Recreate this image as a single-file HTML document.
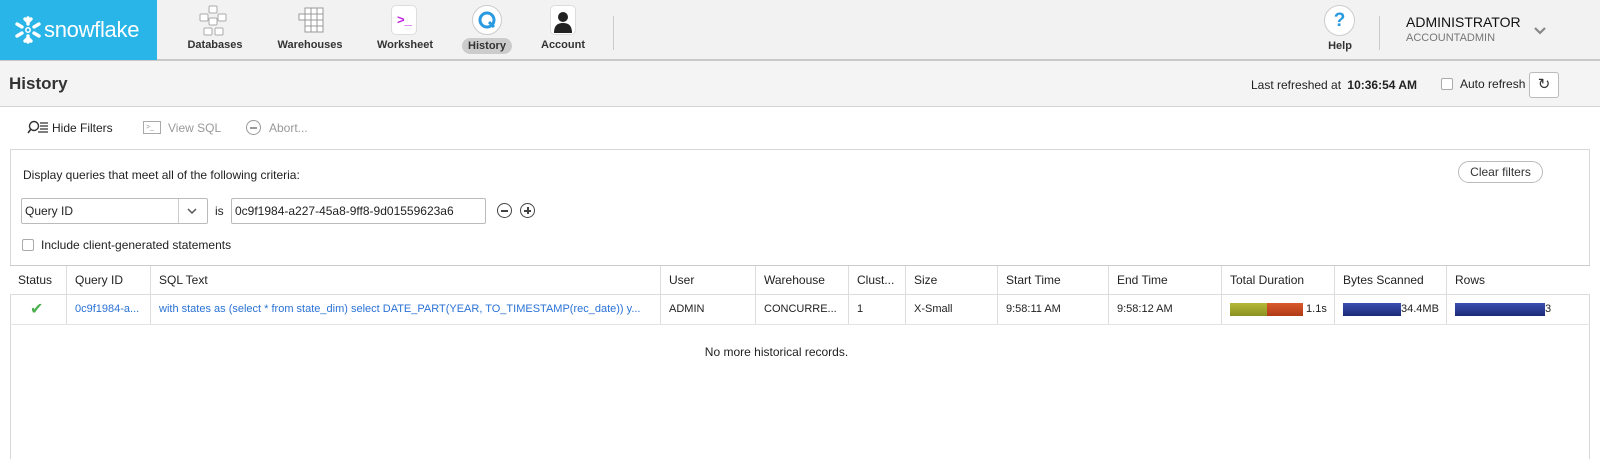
<!DOCTYPE html>
<html><head><meta charset="utf-8"><style>
*{box-sizing:border-box;margin:0;padding:0}
body{width:1600px;height:448px;overflow:hidden;background:#fff;font-family:"Liberation Sans",Arial,sans-serif;font-size:12px;color:#222;position:relative}
.a{position:absolute}
.top{left:0;top:0;width:1600px;height:61px;background:#f2f2f2;border-bottom:2px solid #c8c8c8}
.logo{left:0;top:0;width:157px;height:60px;background:#29b5e8;color:#fff;font-size:22px}
.nav{font-size:11px;font-weight:bold;color:#333;text-align:center}
.ico{width:30px;height:30px;border-radius:5px;background:#fff;border:1px solid #ddd}
.hdr{left:0;top:61px;width:1600px;height:46px;background:#f4f4f4;border-bottom:1px solid #d5d5d5}
.panel{left:10px;top:149px;width:1580px;height:310px;border:1px solid #d8d8d8;border-bottom:none}
.th{top:265px;height:30px;border-top:1px solid #ccc;border-bottom:1px solid #ddd;background:#fff}
.col{position:absolute;top:0;height:100%;border-left:1px solid #ddd;padding-left:8px;line-height:29px;font-size:12px;white-space:nowrap;overflow:hidden}
.blue{color:#2a72d6}
</style></head><body>
<div class="a top"></div>
<div class="a logo">
<svg class="a" style="left:12px;top:15px" width="32" height="30" viewBox="0 0 32 30"><g stroke="#fff" stroke-width="3.4" stroke-linecap="round" fill="none"><path d="M16 3v6M16 21v6M5 9l5 3M22 18l5 3M5 21l5-3M22 12l5-3"/><path d="M13 4l3 3 3-3M13 26l3-3 3 3"/></g><circle cx="16" cy="15" r="2.2" fill="none" stroke="#fff" stroke-width="1.5"/></svg>
<div class="a" style="left:44px;top:17px;letter-spacing:-0.3px">snowflake</div>
</div>
<div class="a" style="left:198px;top:5px"><svg width="32" height="32" viewBox="0 0 32 32" fill="#fff" stroke="#aaa"><rect x="11" y="1" width="8" height="7" rx="1"/><rect x="2" y="9" width="8" height="7" rx="1"/><rect x="20" y="9" width="8" height="7" rx="1"/><rect x="11" y="13" width="8" height="7" rx="1"/><rect x="6" y="23" width="8" height="7" rx="1"/><rect x="17" y="23" width="8" height="7" rx="1"/></svg></div>
<div class="a nav" style="left:180px;top:39px;width:70px">Databases</div>
<div class="a" style="left:297px;top:6px"><svg width="28" height="28" viewBox="0 0 28 28" fill="#fff" stroke="#999"><path d="M8 2h18v24H8zM8 8h18M8 14h18M8 20h18M14 2v24M20 2v24M2 8h6v6H2z"/></svg></div>
<div class="a nav" style="left:270px;top:39px;width:80px">Warehouses</div>
<div class="a ico" style="left:391px;top:5px;width:26px;height:30px"><span class="a" style="left:5px;top:6px;color:#c020e0;font-size:13px;font-weight:bold">&gt;_</span></div>
<div class="a nav" style="left:370px;top:39px;width:70px">Worksheet</div>
<div class="a" style="left:472px;top:5px;width:30px;height:30px;border-radius:50%;background:#fff;border:1px solid #ccc"><svg width="28" height="28" viewBox="0 0 28 28"><circle cx="14" cy="14" r="7" fill="none" stroke="#2a9ae0" stroke-width="3"/><path d="M16 16l5 5" stroke="#2a9ae0" stroke-width="3"/></svg></div>
<div class="a nav" style="left:462px;top:38px;width:50px;height:16px;line-height:16px;border-radius:8px;background:#ccc">History</div>
<div class="a ico" style="left:550px;top:5px;width:26px;height:30px"><svg width="24" height="28" viewBox="0 0 24 28"><circle cx="12" cy="11" r="5" fill="#222"/><path d="M3 27c0-8 4-10 9-10s9 2 9 10z" fill="#222"/></svg></div>
<div class="a nav" style="left:533px;top:39px;width:60px">Account</div>
<div class="a" style="left:613px;top:16px;width:1px;height:34px;background:#ccc"></div>
<div class="a" style="left:1324px;top:5px;width:31px;height:31px;border-radius:50%;background:#fff;border:1px solid #ccc;color:#2a9ae0;font-size:19px;font-weight:bold;text-align:center;line-height:29px">?</div>
<div class="a nav" style="left:1320px;top:40px;width:40px">Help</div>
<div class="a" style="left:1379px;top:16px;width:1px;height:34px;background:#ccc"></div>
<div class="a" style="left:1406px;top:14px;font-size:14px;color:#111">ADMINISTRATOR</div>
<div class="a" style="left:1406px;top:32px;font-size:11px;color:#777">ACCOUNTADMIN</div>
<svg class="a" style="left:1533px;top:26px" width="14" height="10"><path d="M2 2l5 5 5-5" stroke="#888" stroke-width="2.2" fill="none"/></svg>
<div class="a hdr"></div>
<div class="a" style="left:9px;top:74px;font-size:17px;font-weight:bold;color:#333">History</div>
<div class="a" style="left:1251px;top:78px;font-size:12px">Last refreshed at <b style="margin-left:3px">10:36:54 AM</b></div>
<div class="a" style="left:1441px;top:78px;width:12px;height:12px;border:1px solid #aaa;border-radius:2px;background:#fff"></div>
<div class="a" style="left:1460px;top:77px;font-size:12px">Auto refresh</div>
<div class="a" style="left:1529px;top:72px;width:30px;height:26px;border:1px solid #bbb;border-radius:3px;background:#fff;text-align:center;line-height:24px;font-size:15px;color:#333">↻</div>
<svg class="a" style="left:27px;top:120px" width="22" height="15"><circle cx="7" cy="6" r="4.5" fill="none" stroke="#333" stroke-width="1.4"/><path d="M4 9l-3 4" stroke="#333" stroke-width="1.6"/><path d="M13 3h8M13 6h8M13 9h8M11 12h10" stroke="#333" stroke-width="1.2"/></svg>
<div class="a" style="left:52px;top:121px;font-size:12px">Hide Filters</div>
<div class="a" style="left:143px;top:121px;width:18px;height:13px;border:1px solid #aaa;font-size:7px;color:#999;line-height:11px;padding-left:2px">&gt;_</div>
<div class="a" style="left:168px;top:121px;font-size:12px;color:#999">View SQL</div>
<div class="a" style="left:246px;top:120px;width:15px;height:15px;border:1px solid #999;border-radius:50%"><div class="a" style="left:3px;top:6px;width:7px;height:1.5px;background:#999"></div></div>
<div class="a" style="left:269px;top:121px;font-size:12px;color:#999">Abort...</div>
<div class="a panel"></div>
<div class="a" style="left:23px;top:168px;font-size:12px">Display queries that meet all of the following criteria:</div>
<div class="a" style="left:1458px;top:161px;width:85px;height:22px;border:1px solid #bbb;border-radius:11px;text-align:center;line-height:20px;font-size:12px;color:#333">Clear filters</div>
<div class="a" style="left:21px;top:198px;width:187px;height:26px;border:1px solid #bbb;border-radius:2px;background:#fff;line-height:24px;padding-left:3px;font-size:12px">Query ID<div class="a" style="left:156px;top:0;width:1px;height:24px;background:#ccc"></div><svg class="a" style="left:165px;top:9px" width="10" height="7"><path d="M1 1l4 4 4-4" stroke="#555" stroke-width="1.5" fill="none"/></svg></div>
<div class="a" style="left:215px;top:204px;font-size:12px">is</div>
<div class="a" style="left:231px;top:198px;width:255px;height:26px;border:1px solid #bbb;border-radius:2px;line-height:24px;padding-left:3px;font-size:12px">0c9f1984-a227-45a8-9ff8-9d01559623a6</div>
<div class="a" style="left:497px;top:203px;width:15px;height:15px;border:1.3px solid #444;border-radius:50%"><div class="a" style="left:3px;top:6px;width:7px;height:1.5px;background:#444"></div></div>
<div class="a" style="left:520px;top:203px;width:15px;height:15px;border:1.3px solid #444;border-radius:50%"><div class="a" style="left:3px;top:6px;width:7px;height:1.5px;background:#444"></div><div class="a" style="left:6px;top:3px;width:1.5px;height:7px;background:#444"></div></div>
<div class="a" style="left:22px;top:239px;width:12px;height:12px;border:1px solid #aaa;border-radius:2px"></div>
<div class="a" style="left:41px;top:238px;font-size:12px">Include client-generated statements</div>
<div class="a th" style="left:10px;width:1580px">
<div class="col" style="left:0;width:56px;border-left:none">Status</div>
<div class="col" style="left:56px;width:84px">Query ID</div>
<div class="col" style="left:140px;width:510px">SQL Text</div>
<div class="col" style="left:650px;width:95px">User</div>
<div class="col" style="left:745px;width:93px">Warehouse</div>
<div class="col" style="left:838px;width:57px">Clust...</div>
<div class="col" style="left:895px;width:92px">Size</div>
<div class="col" style="left:987px;width:111px">Start Time</div>
<div class="col" style="left:1098px;width:113px">End Time</div>
<div class="col" style="left:1211px;width:113px">Total Duration</div>
<div class="col" style="left:1324px;width:112px">Bytes Scanned</div>
<div class="col" style="left:1436px;width:144px">Rows</div>
</div>
<div class="a" style="left:10px;top:295px;width:1580px;height:30px;border-bottom:1px solid #e4e4e4">
<div class="col" style="left:0;width:56px;border-left:none;color:#4caf50;font-size:16px;padding-left:20px">✔</div>
<div class="col blue" style="left:56px;width:84px;font-size:11px">0c9f1984-a...</div>
<div class="col blue" style="left:140px;width:510px;font-size:11px">with states as (select * from state_dim) select DATE_PART(YEAR, TO_TIMESTAMP(rec_date)) y...</div>
<div class="col" style="left:650px;width:95px;font-size:11px">ADMIN</div>
<div class="col" style="left:745px;width:93px;font-size:11px">CONCURRE...</div>
<div class="col" style="left:838px;width:57px;font-size:11px">1</div>
<div class="col" style="left:895px;width:92px;font-size:11px">X-Small</div>
<div class="col" style="left:987px;width:111px;font-size:11px">9:58:11 AM</div>
<div class="col" style="left:1098px;width:113px;font-size:11px">9:58:12 AM</div>
<div class="col" style="left:1211px;width:113px;font-size:11px"><span style="display:inline-block;vertical-align:middle;width:37px;height:13px;background:linear-gradient(#b5b83a,#8a9120)"></span><span style="display:inline-block;vertical-align:middle;width:36px;height:13px;background:linear-gradient(#d95a2a,#b03a18)"></span> 1.1s</div>
<div class="col" style="left:1324px;width:112px;font-size:11px"><span style="display:inline-block;vertical-align:middle;width:58px;height:13px;background:linear-gradient(#3a4fb0,#1c2a78)"></span>34.4MB</div>
<div class="col" style="left:1436px;width:108px;font-size:11px"><span style="display:inline-block;vertical-align:middle;width:90px;height:13px;background:linear-gradient(#3a4fb0,#1c2a78)"></span>3</div>
</div>
<div class="a" style="left:0;top:345px;width:1553px;text-align:center;font-size:12px">No more historical records.</div>
</body></html>
